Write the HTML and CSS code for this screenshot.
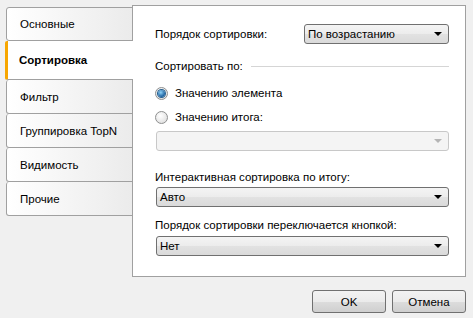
FILE: index.html
```html
<!DOCTYPE html>
<html lang="ru">
<head>
  <meta charset="UTF-8" />
  <title>Сортировка</title>
  <link rel="stylesheet" href="styles.css">
</head>
<body>
  <div class="dialog">
    <div class="body">
      <ul class="tabs">
        <li class="tab">Основные</li>
        <li class="tab active">Сортировка</li>
        <li class="tab">Фильтр</li>
        <li class="tab">Группировка TopN</li>
        <li class="tab">Видимость</li>
        <li class="tab">Прочие</li>
      </ul>

      <section class="panel">
        <div class="row">
          <span class="row-label">Порядок сортировки:</span>
          <div class="combo combo-short"><span>По возрастанию</span><i class="arrow"></i></div>
        </div>

        <div class="group-title">
          <span>Сортировать по:</span>
          <span class="rule"></span>
        </div>

        <label class="radio radio-first">
          <span class="dot checked"></span>
          Значению элемента
        </label>
        <label class="radio radio-second">
          <span class="dot"></span>
          Значению итога:
        </label>
        <div class="combo disabled combo-total"><span></span><i class="arrow"></i></div>

        <div class="field-label label-interactive">Интерактивная сортировка по итогу:</div>
        <div class="combo"><span>Авто</span><i class="arrow"></i></div>

        <div class="field-label label-toggle">Порядок сортировки переключается кнопкой:</div>
        <div class="combo"><span>Нет</span><i class="arrow"></i></div>
      </section>
    </div>

    <footer class="buttons">
      <button class="btn">OK</button>
      <button class="btn">Отмена</button>
    </footer>
  </div>
</body>
</html>
```

FILE: styles.css
```css
* {
  margin: 0;
  padding: 0;
  box-sizing: border-box;
}

body {
  background: #f0f0f0;
  font-family: "Liberation Sans", Arial, sans-serif;
  font-size: 11.5px;
  color: #000;
  width: 473px;
  height: 318px;
  overflow: hidden;
}

.dialog {
  padding: 5px 7px 0 5px;
}

.body {
  display: flex;
  align-items: flex-start;
}

/* tabs on the left */
.tabs {
  list-style: none;
  width: 128px;
  margin-top: 2px;
  margin-right: -1px;
  position: relative;
  z-index: 1;
}

.tab {
  height: 34px;
  margin-left: 1px;
  padding-left: 13px;
  display: flex;
  align-items: center;
  border: 1px solid #a0a0a0;
  border-top: none;
  border-radius: 3px 0 0 3px;
  background: linear-gradient(to right, #ffffff, #ebebeb);
}

.tab:first-child {
  border-top: 1px solid #a0a0a0;
  height: 34px;
}

.tab.active {
  height: 39px;
  margin-left: 0;
  padding-left: 11px;
  border-left: 3px solid #f7a600;
  border-right: none;
  border-radius: 2px 0 0 2px;
  background: #fff;
  font-weight: bold;
}

/* content panel */
.panel {
  width: 334px;
  height: 272px;
  background: #fff;
  border: 1px solid #a0a0a0;
  padding: 18px 16px 0 22px;
}

.row {
  display: flex;
  align-items: center;
}

.row-label {
  width: 149px;
}

.combo {
  height: 20px;
  border: 1px solid #707070;
  border-radius: 3px;
  background: linear-gradient(#f4f4f4, #ececec 50%, #e2e2e2 50%, #dadada);
  display: flex;
  align-items: center;
  justify-content: space-between;
  padding: 0 6px 0 3px;
  width: 293px;
  margin-left: 1px;
}

.combo-short {
  width: 145px;
  margin-left: 0;
}

.combo.disabled {
  border-color: #c8c8c8;
  background: #f4f4f4;
}

.arrow {
  width: 0;
  height: 0;
  border-left: 4px solid transparent;
  border-right: 4px solid transparent;
  border-top: 4px solid #000;
}

.combo.disabled .arrow {
  border-top-color: #b5b5b5;
}

.group-title {
  display: flex;
  align-items: center;
  gap: 8px;
  margin-top: 15px;
  height: 14px;
}

.rule {
  flex: 1;
  height: 1px;
  background: #d5d5d5;
}

.radio {
  display: flex;
  align-items: center;
  gap: 7px;
  height: 14px;
}

.radio-first {
  margin-top: 13px;
}

.radio-second {
  margin-top: 10px;
}

.dot {
  width: 13px;
  height: 13px;
  border-radius: 50%;
  border: 1px solid #8e8f8f;
  background: radial-gradient(circle at 40% 35%, #ffffff, #d8d8d8);
  display: flex;
  align-items: center;
  justify-content: center;
}

.dot.checked::after {
  content: "";
  width: 7px;
  height: 7px;
  border-radius: 50%;
  background: radial-gradient(circle at 40% 35%, #8fd3f8, #1a5f9e 70%);
  box-shadow: 0 0 0 1px #26608f;
}

.combo-total {
  margin-top: 7px;
}

.field-label {
  height: 14px;
  line-height: 14px;
  margin-bottom: 3px;
}

.label-interactive {
  margin-top: 19px;
}

.label-toggle {
  margin-top: 11px;
  margin-bottom: 4px;
}

/* dialog buttons */
.buttons {
  display: flex;
  justify-content: flex-end;
  gap: 6px;
  margin-top: 13px;
}

.btn {
  width: 74px;
  height: 23px;
  border: 1px solid #707070;
  border-radius: 3px;
  background: linear-gradient(#f2f2f2, #ebebeb 50%, #dddddd 50%, #cfcfcf);
  font-family: inherit;
  font-size: inherit;
  color: #000;
}
```
